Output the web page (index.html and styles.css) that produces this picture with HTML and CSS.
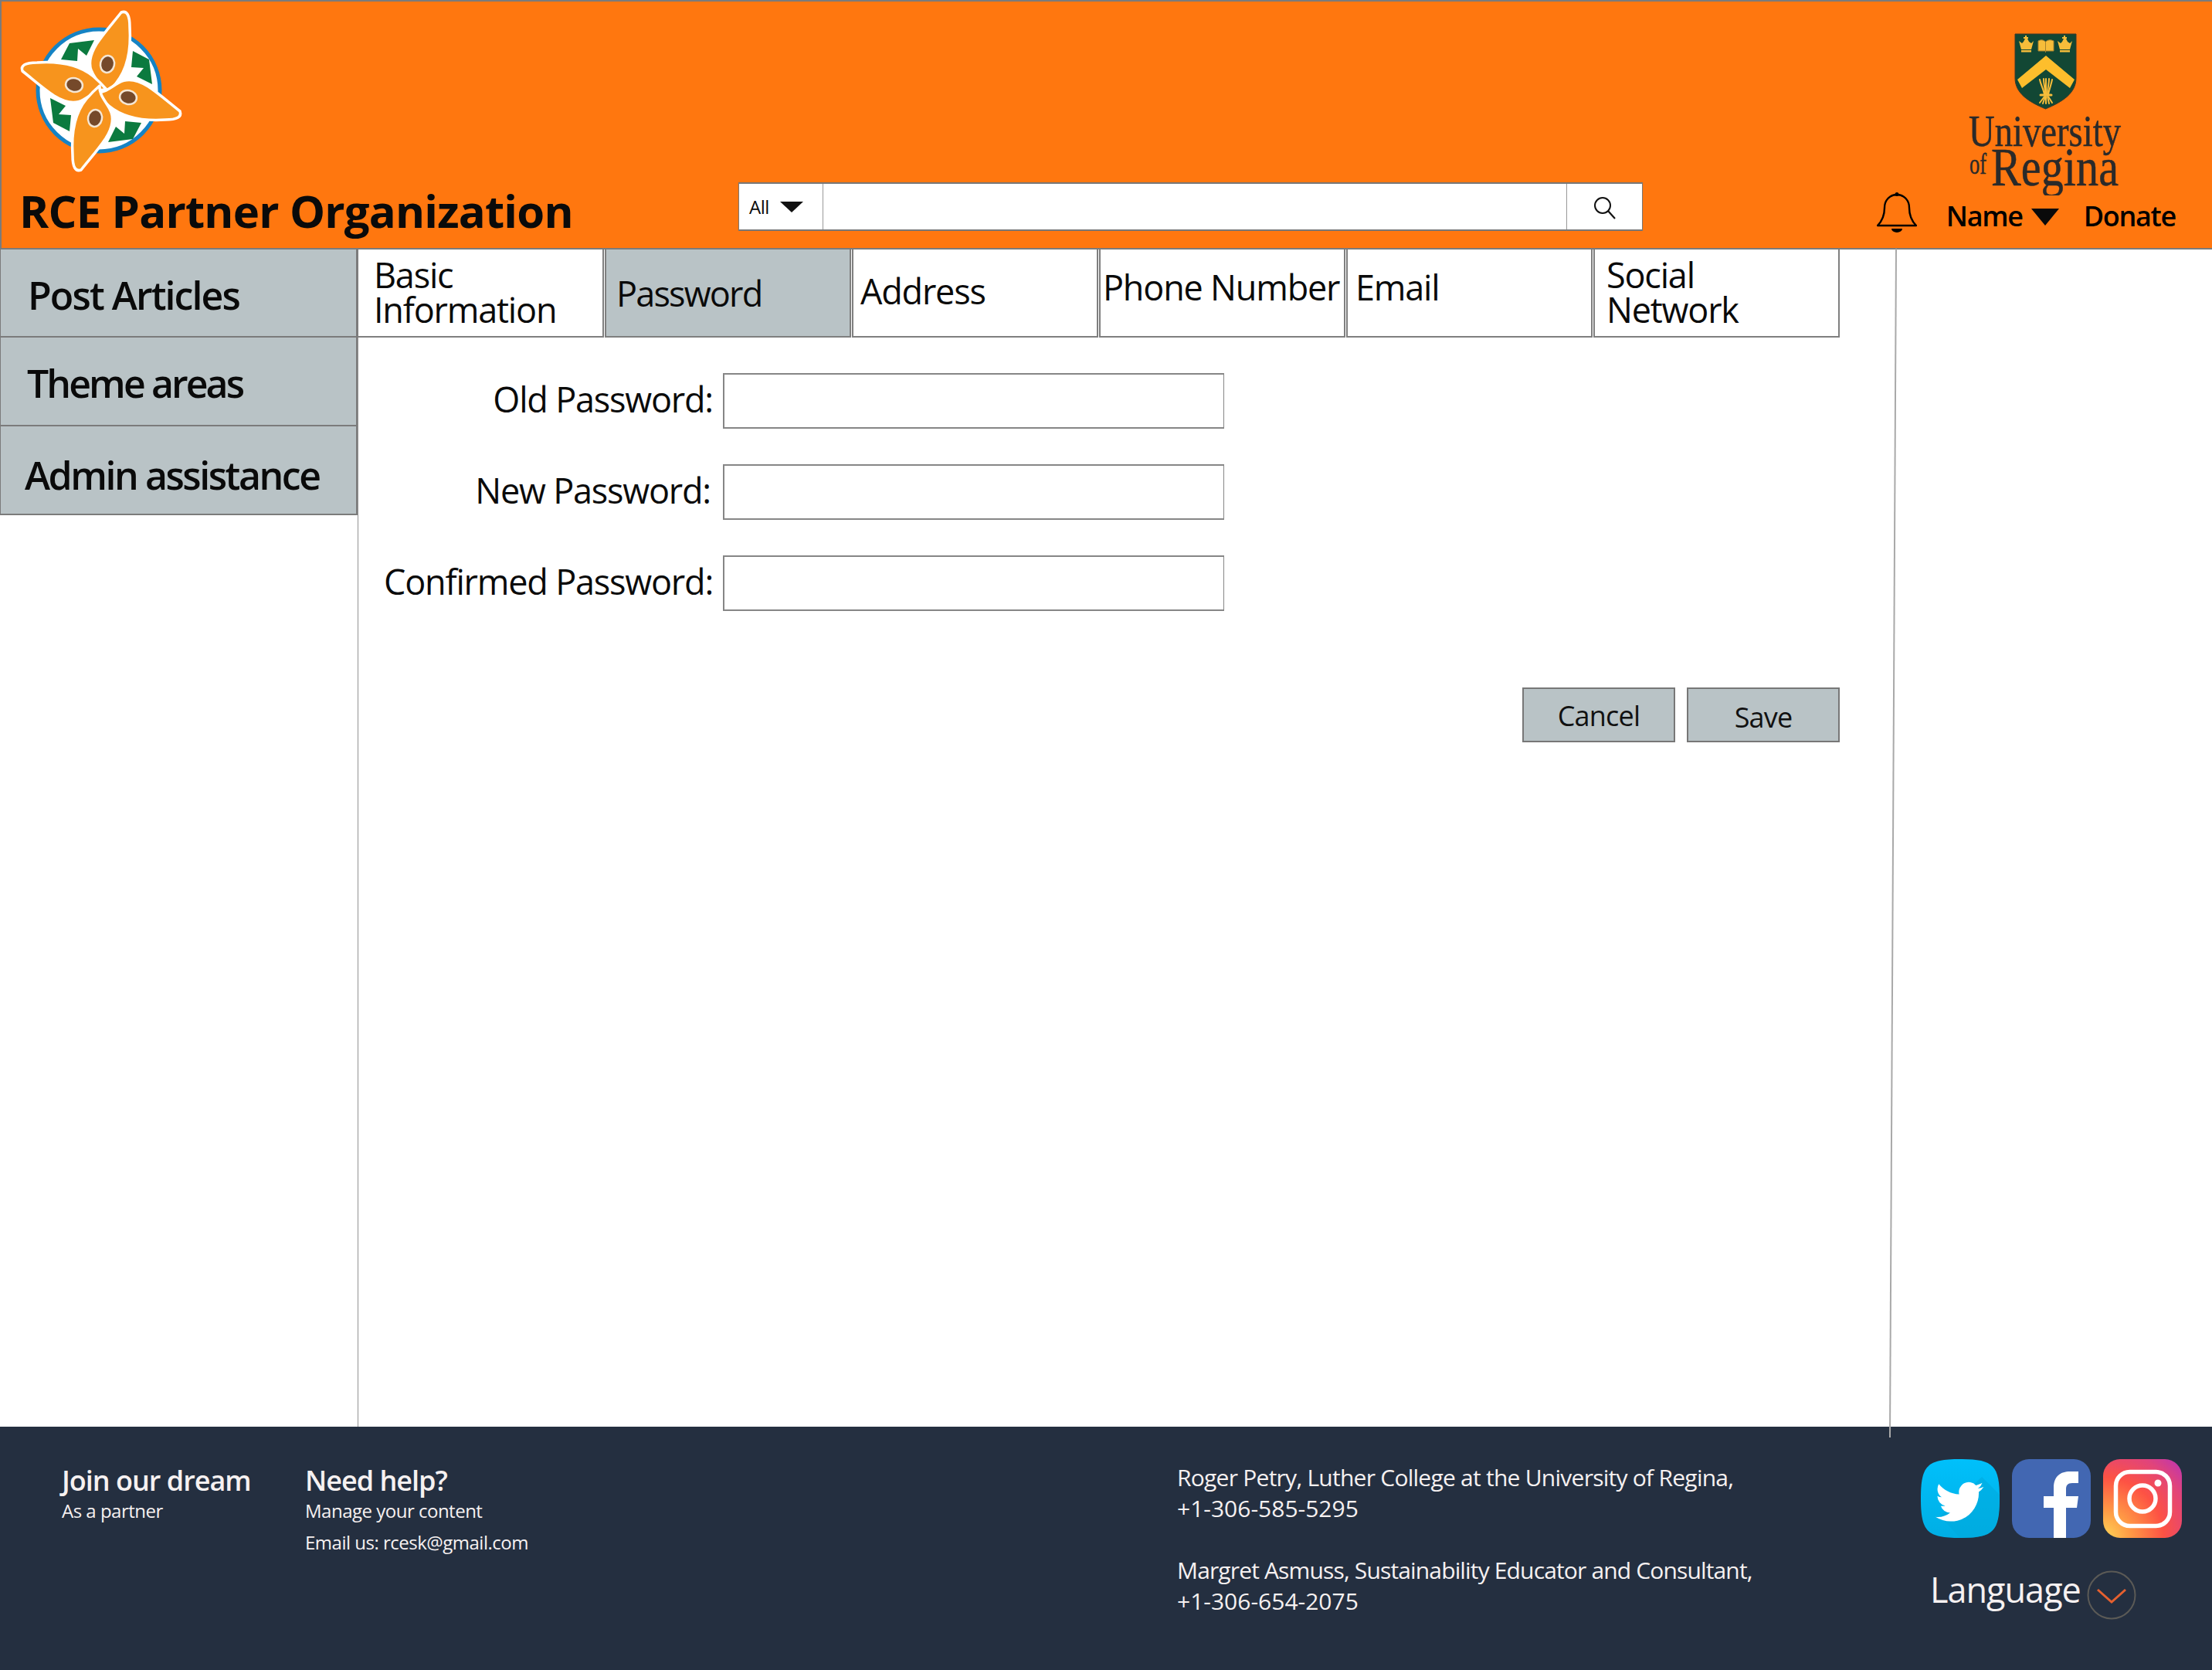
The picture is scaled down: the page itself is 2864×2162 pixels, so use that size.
FILE: index.html
```html
<!DOCTYPE html>
<html lang="en">
<head>
<meta charset="utf-8">
<title>RCE Partner Organization</title>
<link rel="stylesheet" href="styles.css">
</head>
<body>
<div class="page">
  <header class="header">
    <div class="brand">
      <svg class="rce-logo" viewBox="0 0 260 240" width="260" height="240" aria-label="RCE logo">
        <defs>
          <g id="petal">
            <path d="M157 16 Q168 12 168 35 C170 65 165 90 150 108 C144 115 140 119 133 125 C134 114 126 106 120 95 C113 83 117 70 125 57 C135 42 146 30 157 16 Z" fill="#f7941d" stroke="#fff" stroke-width="3.500" stroke-linejoin="round"/>
            <ellipse cx="139" cy="83" rx="9" ry="11" transform="rotate(12 139 83)" fill="#75492a" stroke="#f4e6d4" stroke-width="2.500"/>
          </g>
          <polygon id="tree" points="122,52 112,72 101,63 100,79 79,77 90,56" fill="#0b7a3f"/>
        </defs>
        <circle cx="128" cy="117" r="79" fill="#fff" stroke="#1583c4" stroke-width="5"/>
        <use href="#tree"/>
        <use href="#tree" transform="rotate(90 131 118)"/>
        <use href="#tree" transform="rotate(180 131 118)"/>
        <use href="#tree" transform="rotate(270 131 118)"/>
        <use href="#petal"/>
        <use href="#petal" transform="rotate(90 131 118)"/>
        <use href="#petal" transform="rotate(270 131 118)"/>
        <use href="#petal" transform="rotate(180 131 118)"/>
      </svg>
      <h1 class="title">RCE Partner Organization</h1>
    </div>
    <div class="search">
      <div class="search-scope"><span class="scope-text">All</span><span class="scope-arrow"></span></div>
      <div class="search-input"></div>
      <div class="search-button">
        <svg viewBox="0 0 32 32" width="32" height="32" aria-hidden="true"><circle cx="14" cy="13" r="10" fill="none" stroke="#111" stroke-width="2"/><path d="M21 20 L30 30" stroke="#111" stroke-width="2.200"/></svg>
      </div>
    </div>
    <div class="account">
      <svg class="ur-logo" viewBox="0 0 260 222" width="260" height="222" aria-label="University of Regina">
        <path d="M89 13 H168 V70 C168 90 150 101 128.500 110 C107 101 89 90 89 70 Z" fill="#124734" stroke="#3a3a2a" stroke-width="1"/>
        <path d="M129 41 L166 72 L160 83 L129 59 L98 83 L92 72 Z" fill="#fdbe2c"/>
        <g fill="#f6bd3a">
          <path d="M94 22 L98 25 L100 23 L102 19 H105 L107 23 L110 25 L113 22 L110 33 H97 Z"/>
          <path d="M144 22 L148 25 L150 23 L152 19 H155 L157 23 L160 25 L163 22 L160 33 H147 Z"/>
          <rect x="102" y="15" width="2" height="6"/><rect x="100" y="17" width="6" height="2"/>
          <rect x="152" y="15" width="2" height="6"/><rect x="150" y="17" width="6" height="2"/>
          <rect x="97" y="34" width="13" height="2.500"/><rect x="147" y="34" width="13" height="2.500"/>
        </g>
        <path d="M119 22 Q124 19 128.500 23 Q133 19 139 22 V35 H119 Z" fill="#f6bd3a" stroke="#a8822c" stroke-width="1"/>
        <path d="M128.500 23 V37" stroke="#a8822c" stroke-width="1"/>
        <g stroke="#f6bd3a" stroke-width="2" stroke-linecap="round" fill="none">
          <path d="M127 91 C125 82 122 78 121 72"/><path d="M128 91 C128 82 126 78 126 71"/><path d="M129 91 V71"/><path d="M131 91 C131 82 133 78 133 71"/><path d="M132 91 C134 82 136 78 137 72"/>
          <path d="M122 92 H136" stroke-width="3"/>
          <path d="M127 94 L121 102"/><path d="M128 94 L125 103"/><path d="M129 94 V103"/><path d="M131 94 L133 103"/><path d="M132 94 L137 102"/>
        </g>
        <text class="ur-word" x="29" y="158" font-size="57" textLength="197" lengthAdjust="spacingAndGlyphs">University</text>
        <text class="ur-word" x="30" y="194" font-size="38" textLength="22" lengthAdjust="spacingAndGlyphs">of</text>
        <text class="ur-word" x="58" y="209" font-size="70" textLength="165" lengthAdjust="spacingAndGlyphs">Regina</text>
      </svg>
      <div class="user-row">
        <svg class="bell" viewBox="0 0 52 52" width="52" height="52" aria-hidden="true">
          <circle cx="26" cy="2.500" r="2.500" fill="#000"/>
          <path d="M1 43 H51 C44 36 42 28 42 20 C42 10 35 3 26 3 C17 3 10 10 10 20 C10 28 8 36 1 43 Z" fill="none" stroke="#000" stroke-width="2.400" stroke-linejoin="round"/>
          <path d="M19 47 H33 A7 5 0 0 1 19 47 Z" fill="#000"/>
        </svg>
        <span class="user-link user-name">Name</span>
        <span class="user-arrow"></span>
        <span class="user-link user-donate">Donate</span>
      </div>
    </div>
  </header>

  <main class="main">
    <nav class="sidebar">
      <a class="side-item side-post">Post Articles</a>
      <a class="side-item side-theme">Theme areas</a>
      <a class="side-item side-admin">Admin assistance</a>
    </nav>
    <section class="content">
      <div class="tabs">
        <div class="tab tab-basic">Basic<br>Information</div>
        <div class="tab tab-active tab-password">Password</div>
        <div class="tab tab-address">Address</div>
        <div class="tab tab-phone">Phone Number</div>
        <div class="tab tab-email">Email</div>
        <div class="tab tab-social">Social<br>Network</div>
      </div>
      <form class="form">
        <div class="row"><label class="label">Old Password:</label><div class="input"></div></div>
        <div class="row"><label class="label label-new">New Password:</label><div class="input"></div></div>
        <div class="row"><label class="label">Confirmed Password:</label><div class="input"></div></div>
        <div class="actions">
          <div class="btn">Cancel</div>
          <div class="btn btn-save">Save</div>
        </div>
      </form>
    </section>
    <svg class="slant" viewBox="0 0 16 1540" width="16" height="1540" aria-hidden="true"><path d="M12 0 L4 1539" stroke="#a9a9a9" stroke-width="2" fill="none"/></svg>
  </main>

  <footer class="footer">
    <div class="col-join">
      <h3 class="foot-head">Join our dream</h3>
      <p class="foot-small">As a partner</p>
    </div>
    <div class="col-help">
      <h3 class="foot-head">Need help?</h3>
      <p class="foot-small">Manage your content</p>
      <p class="foot-small">Email us: rcesk@gmail.com</p>
    </div>
    <div class="col-contact">
      <p class="contact">Roger Petry, Luther College at the University of Regina,<br><span class="phone">+1-306-585-5295</span></p>
      <p class="contact contact-second">Margret Asmuss, Sustainability Educator and Consultant,<br><span class="phone">+1-306-654-2075</span></p>
    </div>
    <div class="col-social">
      <div class="socials">
        <svg viewBox="0 0 102 102" width="102" height="102" aria-label="Twitter">
          <defs><linearGradient id="tw" x1="0" y1="0" x2="0" y2="1"><stop offset="0" stop-color="#00c0fb"/><stop offset="1" stop-color="#00aee4"/></linearGradient></defs>
          <path d="M0 51 C0 8 8 0 51 0 C94 0 102 8 102 51 C102 94 94 102 51 102 C8 102 0 94 0 51 Z" fill="url(#tw)"/>
          <path d="M79 23 L102 46 C102 94 94 102 51 102 L25 74 Z" fill="#00a9dd" opacity=".55"/>
          <g transform="translate(19 24) scale(2.600)"><path d="M23.953 4.57a10 10 0 01-2.825.775 4.958 4.958 0 002.163-2.723c-.951.555-2.005.959-3.127 1.184a4.92 4.92 0 00-8.384 4.482C7.69 8.095 4.067 6.13 1.64 3.162a4.822 4.822 0 00-.666 2.475c0 1.71.87 3.213 2.188 4.096a4.904 4.904 0 01-2.228-.616v.06a4.923 4.923 0 003.946 4.827 4.996 4.996 0 01-2.212.085 4.936 4.936 0 004.604 3.417 9.867 9.867 0 01-6.102 2.105c-.39 0-.779-.023-1.17-.067a13.995 13.995 0 007.557 2.209c9.053 0 13.998-7.496 13.998-13.985 0-.21 0-.42-.015-.63A9.935 9.935 0 0024 4.59z" fill="#fff"/></g>
        </svg>
        <svg viewBox="0 0 102 102" width="102" height="102" aria-label="Facebook">
          <rect width="102" height="102" rx="22" fill="#4267b2"/>
          <path d="M54 102 V63 H41 V48 H54 V37 C54 22 63 16 75 16 H86 V31 H78 C72 31 70 34 70 39 V48 H86 L84 63 H70 V102 Z" fill="#fff"/>
        </svg>
        <svg viewBox="0 0 102 102" width="102" height="102" aria-label="Instagram">
          <defs><radialGradient id="ig" cx="0" cy="1" r="1.400"><stop offset="0" stop-color="#fed858"/><stop offset=".25" stop-color="#ff9a45"/><stop offset=".55" stop-color="#fd5244"/><stop offset=".8" stop-color="#e1447a"/><stop offset="1" stop-color="#bc34b4"/></radialGradient></defs>
          <rect width="102" height="102" rx="22" fill="url(#ig)"/>
          <rect x="16.500" y="16.500" width="70" height="70" rx="18" fill="none" stroke="#fff" stroke-width="5.500"/>
          <circle cx="51" cy="51" r="17" fill="none" stroke="#fff" stroke-width="5.500"/>
          <circle cx="71" cy="31" r="4.500" fill="#fff"/>
        </svg>
      </div>
      <div class="language">
        <span class="lang-text">Language</span>
        <svg viewBox="0 0 64 64" width="64" height="64" aria-hidden="true"><circle cx="32" cy="32" r="30.500" fill="none" stroke="#5b5a56" stroke-width="2"/><path d="M14 25 L32 41 L50 25" fill="none" stroke="#e5602f" stroke-width="3"/></svg>
      </div>
    </div>
  </footer>
</div>
</body>
</html>
```

FILE: styles.css
```css
* { box-sizing: border-box; }
html, body { margin: 0; padding: 0; background: #fff; }
body { font-family: "Open Sans", "Noto Sans", sans-serif; color: #0a0a0a; }
h1, h3, p { margin: 0; font-weight: inherit; }

.page { display: flex; flex-direction: column; width: 2864px; height: 2162px; overflow: hidden; }

/* Header */
.header { display: flex; align-items: flex-end; height: 323px; background: #ff770f; border-top: 2px solid #7b7b7b; border-left: 2px solid #7b7b7b; border-bottom: 2px solid #7b7b7b; flex: none; }
.brand { display: flex; flex-direction: column; width: 954px; height: 319px; }
.rce-logo { display: block; margin: -2px 0 0 -2px; flex: none; }
.title { margin: -4px 0 0 23px; font-size: 58px; font-weight: 700; line-height: 74px; letter-spacing: -.8px; color: #0a0a0a; white-space: nowrap; }

.search { display: flex; width: 1171px; height: 63px; margin-bottom: 22px; background: #fff; border: 1px solid #777; border-top-width: 2px; border-bottom-width: 2px; flex: none; }
.search-scope { display: flex; align-items: center; width: 109px; border-right: 1px solid #999; padding-left: 13px; }
.scope-text { font-size: 24px; letter-spacing: -.5px; }
.scope-arrow { width: 0; height: 0; margin-left: 14px; border-left: 15px solid transparent; border-right: 15px solid transparent; border-top: 14px solid #111; }
.search-input { flex: 1; }
.search-button { display: flex; align-items: center; justify-content: center; width: 98px; padding: 3px 2px 0 0; border-left: 1px solid #999; }

.account { display: flex; flex-direction: column; align-items: flex-end; margin-left: auto; padding-right: 47px; height: 319px; }
.ur-logo { display: block; margin: 29px 37px 0 0; flex: none; }
.user-row { display: flex; align-items: center; height: 52px; margin-top: -4px; }
.bell { display: block; flex: none; margin-right: 38px; }
.user-link { padding-top: 10px; font-size: 36px; font-weight: 600; letter-spacing: -1.3px; line-height: 52px; color: #000; }
.user-arrow { width: 0; height: 0; margin: 12px 32px 0 11px; border-left: 18px solid transparent; border-right: 18px solid transparent; border-top: 22px solid #0a0a0a; }

/* Main */
.main { position: relative; display: flex; flex: 1; min-height: 0; }
.sidebar { display: flex; flex-direction: column; width: 463px; flex: none; }
.side-item { display: block; height: 115px; background: #b9c3c6; border-bottom: 2px solid #7b7b7b; border-right: 2px solid #7b7b7b; border-left: 1px solid #7b7b7b; font-size: 50px; font-weight: 600; line-height: 115px; color: #0a0a0a; }
.side-post { height: 114px; padding-left: 35px; line-height: 118px; letter-spacing: -1.9px; }
.side-theme { padding-left: 34px; line-height: 118px; letter-spacing: -2.9px; }
.side-admin { padding-left: 31px; line-height: 126px; letter-spacing: -2.45px; }

.content { flex: 1; border-left: 1px solid #939393; }
.tabs { display: flex; gap: 1px; margin-left: -1px; }
.tab { display: block; width: 319px; height: 114px; background: #fff; border: 2px solid #7f7f7f; border-top: none; font-size: 45px; letter-spacing: -1.2px; line-height: 45px; color: #0a0a0a; white-space: nowrap; }
.tab-active { background: #b9c3c6; }
.tab-basic { padding: 10px 0 0 20px; border-left-width: 1px; }
.tab-password { padding: 34px 0 0 13px; letter-spacing: -1.8px; }
.tab-address { padding: 31px 0 0 9px; }
.tab-phone { padding: 26px 0 0 3px; }
.tab-email { padding: 26px 0 0 10px; }
.tab-social { padding: 10px 0 0 15px; }

.form { display: flex; flex-direction: column; width: 1918px; padding-top: 46px; }
.row { display: flex; align-items: center; height: 72px; margin-bottom: 46px; }
.label { width: 459px; padding-bottom: 5px; text-align: right; font-size: 45px; letter-spacing: -1.2px; line-height: 60px; color: #0a0a0a; white-space: nowrap; }
.label-new { padding-right: 3px; }
.input { width: 649px; height: 72px; margin-left: 13px; background: #fff; border: 2px solid #868686; border-right-width: 1px; }
.actions { display: flex; justify-content: flex-end; gap: 15px; margin-top: 53px; }
.btn { width: 198px; height: 71px; background: #b9c3c6; border: 2px solid #777; text-align: center; font-size: 36px; letter-spacing: -.8px; line-height: 70px; color: #111; }
.btn-save { line-height: 73px; }

.slant { position: absolute; z-index: 2; left: 2443px; top: -1px; }

/* Footer */
.footer { display: grid; grid-template-columns: 315px 1129px 963px 1fr; height: 315px; flex: none; padding-left: 80px; background: #242f40; color: #f6f1f1; }
.foot-head { padding-top: 52px; font-size: 36px; font-weight: 600; letter-spacing: -1px; line-height: 36px; }
.foot-small { font-size: 24px; letter-spacing: -.5px; line-height: 41px; font-weight: 400; }
.col-contact { padding-top: 46px; }
.contact { font-size: 30px; letter-spacing: -.75px; line-height: 40px; }
.contact-second { letter-spacing: -.85px; margin-top: 40px; }
.phone { letter-spacing: 0; }
.col-social { padding-top: 42px; }
.socials { display: flex; gap: 16px; }
.socials svg { display: block; flex: none; }
.language { display: flex; align-items: center; gap: 8px; margin: 28px 0 0 12px; }
.lang-text { font-size: 45px; font-weight: 400; letter-spacing: -1px; line-height: 60px; }
.language svg { display: block; flex: none; margin-top: 14px; }

/* University wordmark */
.ur-word { font-family: "Liberation Serif", serif; fill: #2a2a2a; stroke: #2a2a2a; stroke-width: .5px; }
```
